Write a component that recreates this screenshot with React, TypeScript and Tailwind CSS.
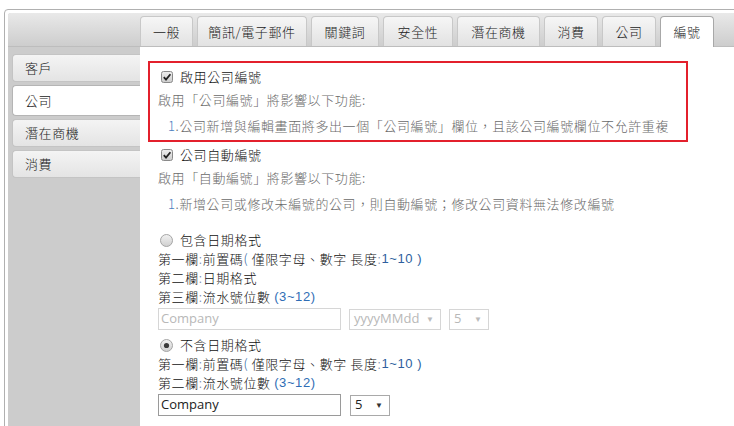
import React from 'react';

const tabs = [
  { label: '一般', w: 'w-[53px]' },
  { label: '簡訊/電子郵件', w: 'w-[110px]' },
  { label: '關鍵詞', w: 'w-[68px]' },
  { label: '安全性', w: 'w-[70px]' },
  { label: '潛在商機', w: 'w-[83px]' },
  { label: '消費', w: 'w-[54px]' },
  { label: '公司', w: 'w-[54px]' },
  { label: '編號', w: 'w-[54px]', active: true },
];

const sideItems = [
  { label: '客戶' },
  { label: '公司', active: true },
  { label: '潛在商機' },
  { label: '消費' },
];

function CheckBox() {
  return (
    <svg width="12" height="12" viewBox="0 0 12 12" className="shrink-0">
      <defs>
        <linearGradient id="cbg" x1="0" y1="0" x2="0" y2="1">
          <stop offset="0" stopColor="#eeeeee" />
          <stop offset="1" stopColor="#cccccc" />
        </linearGradient>
      </defs>
      <rect x="0.5" y="0.5" width="11" height="11" rx="2" fill="url(#cbg)" stroke="#8a8a8a" />
      <path d="M2.8 6.2 L5 8.6 L9.4 3.2" fill="none" stroke="#222" strokeWidth="1.8" />
    </svg>
  );
}

function Radio({ checked }: { checked?: boolean }) {
  return (
    <svg width="13" height="13" viewBox="0 0 13 13" className="shrink-0">
      <defs>
        <linearGradient id="rbg" x1="0" y1="0" x2="0" y2="1">
          <stop offset="0" stopColor="#f2f2f2" />
          <stop offset="1" stopColor="#cfcfcf" />
        </linearGradient>
      </defs>
      <circle cx="6.5" cy="6.5" r="6" fill="url(#rbg)" stroke="#a5a5a5" />
      {checked && <circle cx="6.5" cy="6.5" r="2.6" fill="#3a3a3a" />}
    </svg>
  );
}

function Select({ value, w, disabled }: { value: string; w: string; disabled?: boolean }) {
  return (
    <div
      className={`${w} h-[21px] flex items-center justify-between pl-[4px] pr-[6px] border ${
        disabled ? 'border-[#d6d6d6] text-[#b8b8b8]' : 'border-[#a9a9a9] text-[#222]'
      } font-['Open_Sans',sans-serif] font-normal text-[13px] tracking-normal`}
    >
      <span>{value}</span>
      <span className={`text-[8px] ${disabled ? 'text-[#bbb]' : 'text-[#333]'}`}>▼</span>
    </div>
  );
}

const colon = <span className="text-[#7a8fb0]">:</span>;

export default function App() {
  return (
    <div className="w-[734px] h-[426px] overflow-hidden bg-white pt-[9px] pl-[4px] font-['Noto_Sans_CJK_TC',sans-serif] font-light text-[13px] tracking-[0.6px]">
      <div className="w-[760px] h-[440px] border border-[#b0b0b0] rounded-[4px] p-[3px]">
        <div className="h-full rounded-[3px] bg-[#cccccc] flex flex-col overflow-hidden">
          {/* tabs */}
          <div className="h-[34px] shrink-0 bg-gradient-to-b from-[#e9e9e9] to-[#cdcdcd] flex items-end pl-[132px] gap-[4px] border-b border-[#bdbdbd]">
            {tabs.map((t) => (
              <div
                key={t.label}
                className={`${t.w} h-[30px] rounded-t-[4px] border border-b-0 flex items-center justify-center text-[#222] ${
                  t.active
                    ? 'bg-white border-[#a8a8a8] h-[31px] -mb-px'
                    : 'bg-gradient-to-b from-[#f6f6f6] to-[#e2e2e2] border-[#c8c8c8]'
                }`}
              >
                {t.label}
              </div>
            ))}
          </div>
          <div className="flex flex-1">
            {/* sidebar */}
            <div className="w-[132px] shrink-0 pt-[7px] pl-[4px] flex flex-col gap-[3px]">
              {sideItems.map((s) => (
                <div
                  key={s.label}
                  className={`h-[28px] rounded-l-[4px] border border-r-0 flex items-center pl-[12px] text-[#222] ${
                    s.active
                      ? 'bg-white border-[#b5b5b5] h-[31px]'
                      : 'bg-gradient-to-b from-[#f4f4f4] to-[#e4e4e4] border-[#c4c4c4]'
                  }`}
                >
                  {s.label}
                </div>
              ))}
            </div>
            {/* content */}
            <div className="flex-1 bg-white pt-[14px] pl-[8px] text-[#111]">
              <div className="w-[540px] h-[81px] border-[2px] border-[#e3202c] pl-[8px] pt-[3px]">
                <div className="h-[22px] flex items-center gap-[7px] pl-[3px]">
                  <CheckBox />
                  <span>啟用公司編號</span>
                </div>
                <div className="h-[24px] flex items-center text-[#6a6a6a]">啟用「公司編號」將影響以下功能:</div>
                <div className="h-[28px] flex items-center pl-[10px] text-[#6a6a6a]">
                  <span className="text-[#4d7fc0]">1</span>.公司新增與編輯畫面將多出一個「公司編號」欄位，且該公司編號欄位不允許重複
                </div>
              </div>
              <div className="pl-[10px]">
                <div className="h-[22px] flex items-center gap-[7px] pl-[3px] mt-[2px]">
                  <CheckBox />
                  <span>公司自動編號</span>
                </div>
                <div className="h-[24px] flex items-center text-[#6a6a6a]">啟用「自動編號」將影響以下功能:</div>
                <div className="h-[28px] flex items-center pl-[10px] text-[#6a6a6a]">
                  <span className="text-[#4d7fc0]">1</span>.新增公司或修改未編號的公司，則自動編號；修改公司資料無法修改編號
                </div>

                <div className="h-[18px] flex items-center gap-[7px] pl-[2px] mt-[13px]">
                  <Radio />
                  <span>包含日期格式</span>
                </div>
                <div className="h-[19px] flex items-center">
                  第一欄{colon}前置碼<span className="text-[#2e5f9e]">(</span>&nbsp;僅限字母、數字 長度{colon}
                  <span className="text-[#2e5f9e] font-['Liberation_Sans',sans-serif] font-normal">1~10 )</span>
                </div>
                <div className="h-[19px] flex items-center">第二欄{colon}日期格式</div>
                <div className="h-[19px] flex items-center">
                  第三欄{colon}流水號位數&nbsp;<span className="text-[#2f6db5] font-['Liberation_Sans',sans-serif] font-normal">(3~12)</span>
                </div>
                <div className="flex items-center gap-[8px] mt-[2px]">
                  <div className="w-[183px] h-[22px] border border-[#d6d6d6] flex items-center pl-[2px] font-['Open_Sans',sans-serif] font-normal text-[13px] text-[#b8b8b8] tracking-normal">
                    Company
                  </div>
                  <Select value="yyyyMMdd" w="w-[92px]" disabled />
                  <Select value="5" w="w-[40px]" disabled />
                </div>

                <div className="h-[18px] flex items-center gap-[7px] pl-[2px] mt-[6px]">
                  <Radio checked />
                  <span>不含日期格式</span>
                </div>
                <div className="h-[19px] flex items-center">
                  第一欄{colon}前置碼<span className="text-[#2e5f9e]">(</span>&nbsp;僅限字母、數字 長度{colon}
                  <span className="text-[#2e5f9e] font-['Liberation_Sans',sans-serif] font-normal">1~10 )</span>
                </div>
                <div className="h-[19px] flex items-center">
                  第二欄{colon}流水號位數&nbsp;<span className="text-[#2f6db5] font-['Liberation_Sans',sans-serif] font-normal">(3~12)</span>
                </div>
                <div className="flex items-center gap-[9px] mt-[2px]">
                  <div className="w-[183px] h-[22px] border border-[#9a9a9a] flex items-center pl-[2px] font-['Open_Sans',sans-serif] font-normal text-[13px] text-[#222] tracking-normal">
                    Company
                  </div>
                  <Select value="5" w="w-[40px]" />
                </div>
              </div>
            </div>
          </div>
        </div>
      </div>
    </div>
  );
}
